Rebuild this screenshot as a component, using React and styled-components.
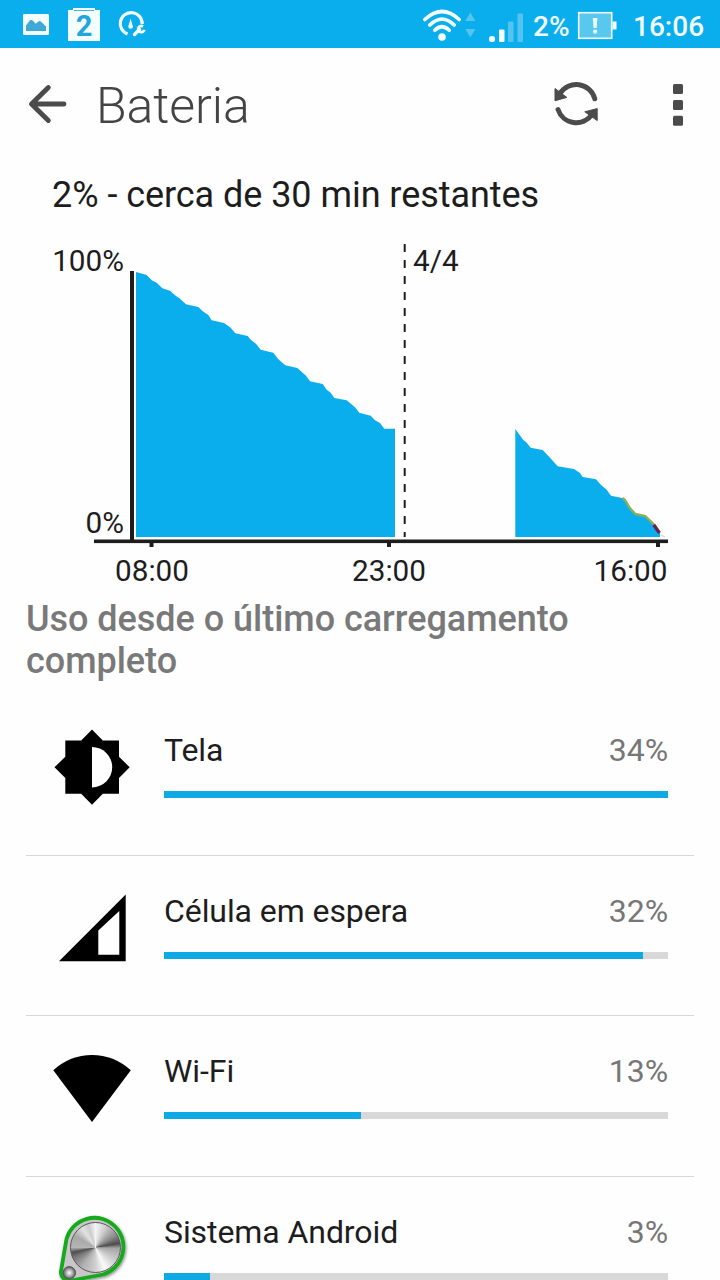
import React, { Fragment } from "react";
import styled, { createGlobalStyle } from "styled-components";

const GlobalStyle = createGlobalStyle`
    body {
        margin: 0;
        padding: 0;
        background-color: #fefefe;
        font-family: Roboto, "Liberation Sans", sans-serif;
    }
    svg {
        display: block;
        flex-shrink: 0;
    }
`;

const Screen = styled.div`
  width: 720px;
  height: 1280px;
  overflow: hidden;
  display: flex;
  flex-direction: column;
  background-color: #fefefe;
  color: #1d1d1d;
`;

const StatusBar = styled.div`
  height: 48px;
  flex-shrink: 0;
  display: flex;
  align-items: center;
  justify-content: space-between;
  background-color: #0aaeec;
`;

const StatusGroup = styled.div`
  height: 48px;
  display: flex;
  align-items: center;
`;

const StatusText = styled.span`
  width: ${props => props.$width}px;
  margin-left: ${props => props.$gap}px;
  padding-top: 6px;
  color: #f2fcff;
  font-size: 28px;
  font-weight: 500;
  line-height: 44px;
  white-space: nowrap;
`;

const ActionBar = styled.div`
  height: 112px;
  flex-shrink: 0;
  display: flex;
  align-items: center;
`;

const Title = styled.h1`
  flex: 1;
  margin: 0;
  padding: 3px 0 0 21px;
  font-size: 50px;
  font-weight: 300;
  line-height: 60px;
  letter-spacing: -0.1px;
  color: #444444;
`;

const Summary = styled.div`
  height: 72px;
  flex-shrink: 0;
  padding: 13px 0 0 52px;
  box-sizing: border-box;
  font-size: 36px;
  line-height: 44px;
  letter-spacing: -0.05px;
  white-space: nowrap;
`;

const SectionTitle = styled.h2`
  margin: 6px 26px 0;
  height: 97px;
  flex-shrink: 0;
  font-size: 36px;
  font-weight: 500;
  line-height: 42px;
  letter-spacing: -0.03px;
  color: #797979;
`;

const UsageList = styled.div`
  display: flex;
  flex-direction: column;
  margin: 0 26px;
`;

const UsageRow = styled.div`
  height: 159.67px;
  flex-shrink: 0;
  display: flex;
  border-bottom: 1px solid #d8d8d8;
`;

const IconSlot = styled.div`
  width: 80px;
  height: 80px;
  margin: 32px 32px 0 26px;
  position: relative;
`;

const UsageInfo = styled.div`
  width: 504px;
  padding-top: 36px;
`;

const UsageLabels = styled.div`
  display: flex;
  justify-content: space-between;
  font-size: 32px;
  line-height: 38px;
  letter-spacing: -0.08px;
  margin-bottom: 22px;
`;

const Percent = styled.span`
  color: #777777;
`;

const Track = styled.div`
  height: 7px;
  background-color: #d8d8d8;
`;

const Fill = styled.div`
  height: 7px;
  background-color: #0fa9e4;
`;

const MetalDisc = styled.div`
  position: absolute;
  left: 18px;
  top: 13px;
  width: 49px;
  height: 49px;
  border: 1px solid #5d555d;
  border-radius: 50%;
  background: conic-gradient(
    #f4f4f4 0deg, #cfcfcf 25deg, #8a8a8a 60deg, #4c4c4c 80deg, #a5a5a5 92deg,
    #d5d5d5 130deg, #fafafa 155deg, #d0d0d0 180deg, #b0b0b0 215deg,
    #777777 245deg, #4f4f4f 258deg, #b5b5b5 270deg, #a9a9a9 300deg,
    #e2e2e2 325deg, #cccccc 342deg, #f4f4f4 360deg
  );
`;

const NotificationIcons = () => (
  <svg width="150" height="48" viewBox="0 0 150 48">
    <rect x="23" y="14" width="26" height="21" rx="1" fill="#f4fdff" />
    <path d="M26 31V25.5L30 20.3q1.5-1 3 .5l2.6 3 3-2.4q1.5-1 3 .8L46 26.5V31Z" fill="#3fa9d6" />
    <path d="M73 8h22v2h5v31H68V10h5Z" fill="#f4fdff" />
    <path d="M74 10.5h20" stroke="#3db9e8" strokeWidth="1" />
    <text x="84" y="36" textAnchor="middle" fontSize="29" fontWeight="700" fill="#20a5dc">2</text>
    <path d="M127.5 34A11 11 0 1 1 142.2 24" fill="none" stroke="#f4fdff" strokeWidth="3.2" />
    <path d="M130.6 18.5l2.3 8a2.3 2.3 0 1 1-4.6 0Z" fill="#f4fdff" />
    <path d="M134.5 34.5l5-5" stroke="#f4fdff" strokeWidth="3.4" strokeLinecap="round" />
    <path d="M143 26.5a3.1 3.1 0 1 0 1.3 3.3" fill="none" stroke="#f4fdff" strokeWidth="2.8" />
  </svg>
);

const SignalIcons = () => (
  <svg width="106" height="48" viewBox="420 0 106 48">
    <g fill="none" stroke="#f4fdff" strokeWidth="3.7" strokeLinecap="round">
      <path d="M424.8 19.5Q442 3.5 459.2 19.5" />
      <path d="M429.8 25Q442 13.2 454.2 25" />
      <path d="M434.8 30.3Q442 23.2 449.2 30.3" />
    </g>
    <circle cx="442" cy="37" r="3.8" fill="#f4fdff" />
    <path d="M470.3 12.5l5 8.5h-10ZM470.3 37.5l5-8.5h-10Z" fill="#55c5ee" />
    <rect x="489" y="36" width="6" height="6" rx="2.5" fill="#f4fdff" />
    <rect x="499" y="29.5" width="5.5" height="12.5" rx="1" fill="#f4fdff" />
    <rect x="508" y="21.5" width="5.5" height="20.5" rx="1" fill="#54c3ee" />
    <rect x="517.5" y="13.5" width="5.5" height="28.5" rx="1" fill="#54c3ee" />
  </svg>
);

const BatteryIcon = () => (
  <svg width="42" height="48" viewBox="576 0 42 48">
    <rect x="578.7" y="12.7" width="33" height="25.6" fill="#59c8ee" stroke="#f4fdff" strokeWidth="1.6" />
    <rect x="612.5" y="21.5" width="4" height="8" fill="#f4fdff" />
    <path d="M592.8 18h4.6l-.8 10h-3Z" fill="#f4fdff" />
    <circle cx="595.1" cy="31.7" r="2.1" fill="#f4fdff" />
  </svg>
);

const BackIcon = () => (
  <svg width="75" height="60" viewBox="0 74 75 60">
    <path d="M64 104H32M48.3 87.5L31.5 104l16.8 16.5" fill="none" stroke="#4b4b4b" strokeWidth="4.9" strokeLinecap="round" strokeLinejoin="round" />
  </svg>
);

const RefreshIcon = () => (
  <svg width="60" height="60" viewBox="546 74 60 60">
    <g fill="none" stroke="#4b4b4b" strokeWidth="4.9" strokeLinecap="round">
      <path d="M560 93.5A19.2 19.2 0 0 1 594.8 98.8" />
      <path d="M592 114.5A19.2 19.2 0 0 1 558 109.5" />
    </g>
    <path d="M555 88.5v12.3l11.8-3.4ZM597.2 120.6V108.6l-12.4 3.2Z" fill="#4b4b4b" stroke="#4b4b4b" strokeLinejoin="round" />
  </svg>
);

const MoreIcon = () => (
  <svg width="114" height="60" viewBox="606 74 114 60" fill="#4b4b4b">
    <rect x="673" y="84" width="10" height="10" rx="1.5" />
    <rect x="673" y="100" width="10" height="10" rx="1.5" />
    <rect x="673" y="115.7" width="10" height="10" rx="1.5" />
  </svg>
);

const BatteryChart = () => (
  <svg width="720" height="360" viewBox="0 232 720 360">
    <path
      d="M136 537V272L146.7 275 151.7 280.3 156.7 282.7 162.3 288.3 170 290.7 175 295.3 180 298.7 186 304.3 198.3 307 202.7 311.3 208.3 315 211.7 320.3 224 323 230.7 327.7 235.3 333.3 247.7 336 250.7 339.7 256 343.7 260.7 349.7 273.3 352.7 278.3 359.3 285.3 365.3 297.3 368 306 375.7 310 381.3 322.7 384 326.7 389.7 330.7 392.7 334.3 398 346.7 400.3 355 407.3 359.3 412.7 370.7 415.7 375 420.3 380 423 384.3 428.7H395V537Z"
      fill="#0aaeec"
    />
    <path
      d="M515.3 537V429L523.3 440 526.7 442.7 530.7 447.7 542.7 450 550 457.7 557.7 466.3 574 469 580 473 582.7 477 596 479.3 601 485 606.7 489.7 611 495.7 623.3 498.3 630 508.3 635.3 514.3 645.3 516 654 524.7 660 533.3V537Z"
      fill="#0aaeec"
    />
    <path d="M622.5 498L625 500 630 508.3 635.3 514 645.3 516 654 524.7" fill="none" stroke="#8fae55" strokeWidth="2.4" />
    <path d="M653.7 524.7L659.5 533" stroke="#6b2449" strokeWidth="3.4" />
    <path d="M661 535L665 537" stroke="#d5dce8" strokeWidth="1.5" />
    <path d="M404.7 244V537" stroke="#1d1d1d" strokeWidth="2" strokeDasharray="8 8" />
    <g fill="#1d1d1d">
      <rect x="130" y="271" width="4" height="270" />
      <rect x="94" y="539.5" width="574" height="3.6" />
      <rect x="149.5" y="542" width="4" height="5" />
      <rect x="387" y="542" width="4" height="5" />
      <rect x="656" y="542" width="4" height="5" />
    </g>
    <g fontSize="29.7" fill="#1d1d1d">
      <text x="124" y="271" textAnchor="end">100%</text>
      <text x="124" y="533" textAnchor="end">0%</text>
      <text x="413" y="271">4/4</text>
      <text x="152" y="580.5" textAnchor="middle">08:00</text>
      <text x="389" y="580.5" textAnchor="middle">23:00</text>
      <text x="667.5" y="580.5" textAnchor="end">16:00</text>
    </g>
  </svg>
);

const ScreenIcon = () => (
  <svg width="80" height="80" viewBox="52 727 80 80">
    <path d="M92 729.5L102.8 740.5H119V756.7L129.7 767.3 119 778V793.7H102.8L92 804.7 81.2 793.7H65.3V778L54.5 767.3 65.3 756.7V740.5H81.2Z" />
    <path d="M92 747a20.2 20.2 0 0 1 0 40.4Z" fill="#fefefe" />
  </svg>
);

const CellIcon = () => (
  <svg width="80" height="80" viewBox="52 888 80 80">
    <path d="M59 961.3L125.7 894.5V961.3ZM98.3 930.5V954.7H119.3V911Z" fillRule="evenodd" />
  </svg>
);

const WifiIcon = () => (
  <svg width="80" height="80" viewBox="52 1048 80 80">
    <path d="M92 1122L53.3 1070.3Q70 1055 92 1055T130.8 1070.3Z" />
  </svg>
);

const SystemIcon = () => (
  <Fragment>
    <svg width="80" height="80" viewBox="52 1209 80 80">
      <defs>
        <filter id="beltShadow" x="-20%" y="-20%" width="140%" height="140%">
          <feDropShadow dx="1" dy="1.5" stdDeviation="1.5" floodOpacity="0.45" />
        </filter>
        <radialGradient id="pulley">
          <stop offset="0" stopColor="#ffffff" />
          <stop offset="0.55" stopColor="#aaaaaa" />
          <stop offset="1" stopColor="#555555" />
        </radialGradient>
      </defs>
      <path
        d="M66.5 1239A29 29 0 1 1 103 1274.5L71 1280.5A8.5 8.5 0 0 1 61 1271Z"
        fill="#c9c6c9"
        stroke="#12a91b"
        strokeWidth="3.8"
        strokeLinejoin="round"
        filter="url(#beltShadow)"
      />
      <circle cx="69.3" cy="1272.8" r="6.2" fill="url(#pulley)" stroke="#555" />
    </svg>
    <MetalDisc />
  </Fragment>
);

const usageItems = [
  { name: "Tela", percent: 34, fill: 504, Icon: ScreenIcon },
  { name: "Célula em espera", percent: 32, fill: 479, Icon: CellIcon },
  { name: "Wi-Fi", percent: 13, fill: 197, Icon: WifiIcon },
  { name: "Sistema Android", percent: 3, fill: 46, Icon: SystemIcon }
];

const UsageItem = ({ item }) => {
  const { name, percent, fill, Icon } = item;
  return (
    <UsageRow>
      <IconSlot>
        <Icon />
      </IconSlot>
      <UsageInfo>
        <UsageLabels>
          <span>{name}</span>
          <Percent>{percent}%</Percent>
        </UsageLabels>
        <Track>
          <Fill style={{ width: fill }} />
        </Track>
      </UsageInfo>
    </UsageRow>
  );
};

export default () => {
  return (
    <Fragment>
      <GlobalStyle />
      <Screen>
        <StatusBar>
          <NotificationIcons />
          <StatusGroup>
            <SignalIcons />
            <StatusText $width={43} $gap={7}>2%</StatusText>
            <BatteryIcon />
            <StatusText $width={87} $gap={15}>16:06</StatusText>
          </StatusGroup>
        </StatusBar>
        <ActionBar>
          <BackIcon />
          <Title>Bateria</Title>
          <RefreshIcon />
          <MoreIcon />
        </ActionBar>
        <Summary>2% - cerca de 30 min restantes</Summary>
        <BatteryChart />
        <SectionTitle>Uso desde o último carregamento completo</SectionTitle>
        <UsageList>
          {usageItems.map((item, idx) => {
            return <UsageItem key={idx} item={item} />;
          })}
        </UsageList>
      </Screen>
    </Fragment>
  );
};
